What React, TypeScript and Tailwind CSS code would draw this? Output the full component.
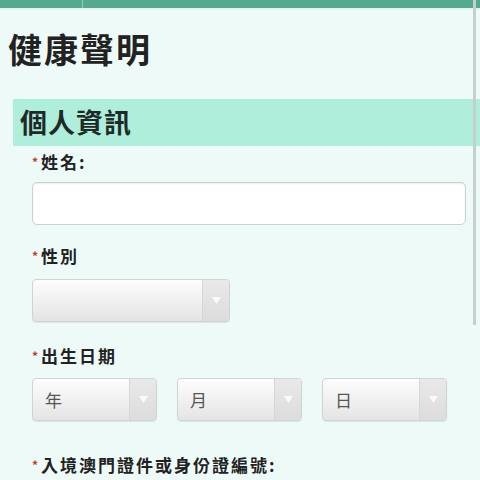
import React from "react";

const cjk = { fontFamily: '"Noto Sans CJK TC", "Noto Sans", sans-serif' };

const Label = ({ text }: { text: string }) => (
  <div className="flex items-start text-[17px] font-bold leading-[20px] text-[#222] tracking-[2px]">
    <span className="text-[#c0392b] text-[12px] leading-[16px] mr-[1px] mt-[2px]">*</span>
    <span>{text}</span>
  </div>
);

const Select = ({ placeholder, width }: { placeholder?: string; width: string }) => (
  <div
    className={`${width} h-[43px] flex rounded-[4px] border border-[#cfd3d3] bg-gradient-to-b from-[#fdfdfd] to-[#e4e4e4] shadow-[0_1px_1px_rgba(0,0,0,0.08)] overflow-hidden`}
  >
    <div className="flex-1 flex items-center pl-[12px] text-[17px] text-[#555]">{placeholder}</div>
    <div className="w-[27px] flex items-center justify-center border-l border-[#d6d6d6] bg-gradient-to-b from-[#e9e9e9] to-[#dcdcdc]">
      <svg width="9" height="7" viewBox="0 0 9 7">
        <path d="M0 0 L9 0 L4.5 7 Z" fill="#fafafa" />
      </svg>
    </div>
  </div>
);

export default function App() {
  return (
    <div className="relative w-[480px] h-[480px] overflow-hidden bg-[#eefaf8]" style={cjk}>
      <div className="h-[8px] bg-[#56a88e] flex">
        <div className="w-[82px]" />
        <div className="w-[1px] bg-[#8fcbb8]" />
      </div>
      <div className="h-[2px] bg-[#dff5f0]" />
      <h1 className="ml-[8px] mt-[19px] text-[34px] leading-[40px] font-bold text-[#222] tracking-[2px]">健康聲明</h1>
      <div className="ml-[13px] mt-[30px] h-[47px] bg-[#aeeedb] flex items-center pl-[7px]">
        <span className="text-[27px] font-bold text-[#1e2a28] tracking-[1px]">個人資訊</span>
      </div>
      <div className="pl-[32px] pr-[14px] flex flex-col">
        <div className="mt-[6px]">
          <Label text="姓名:" />
        </div>
        <div className="mt-[10px] h-[43px] rounded-[5px] border border-[#ccd0d0] bg-white shadow-[inset_0_1px_2px_rgba(0,0,0,0.08)]" />
        <div className="mt-[21px]">
          <Label text="性別" />
        </div>
        <div className="mt-[13px]">
          <Select width="w-[198px]" />
        </div>
        <div className="mt-[24px]">
          <Label text="出生日期" />
        </div>
        <div className="mt-[12px] flex gap-[20px]">
          <Select width="w-[125px]" placeholder="年" />
          <Select width="w-[125px]" placeholder="月" />
          <Select width="w-[125px]" placeholder="日" />
        </div>
        <div className="mt-[34px]">
          <Label text="入境澳門證件或身份證編號:" />
        </div>
      </div>
      <div className="absolute right-[4px] top-0 w-[3px] h-[325px] bg-[#c5cfcc]" />
    </div>
  );
}
